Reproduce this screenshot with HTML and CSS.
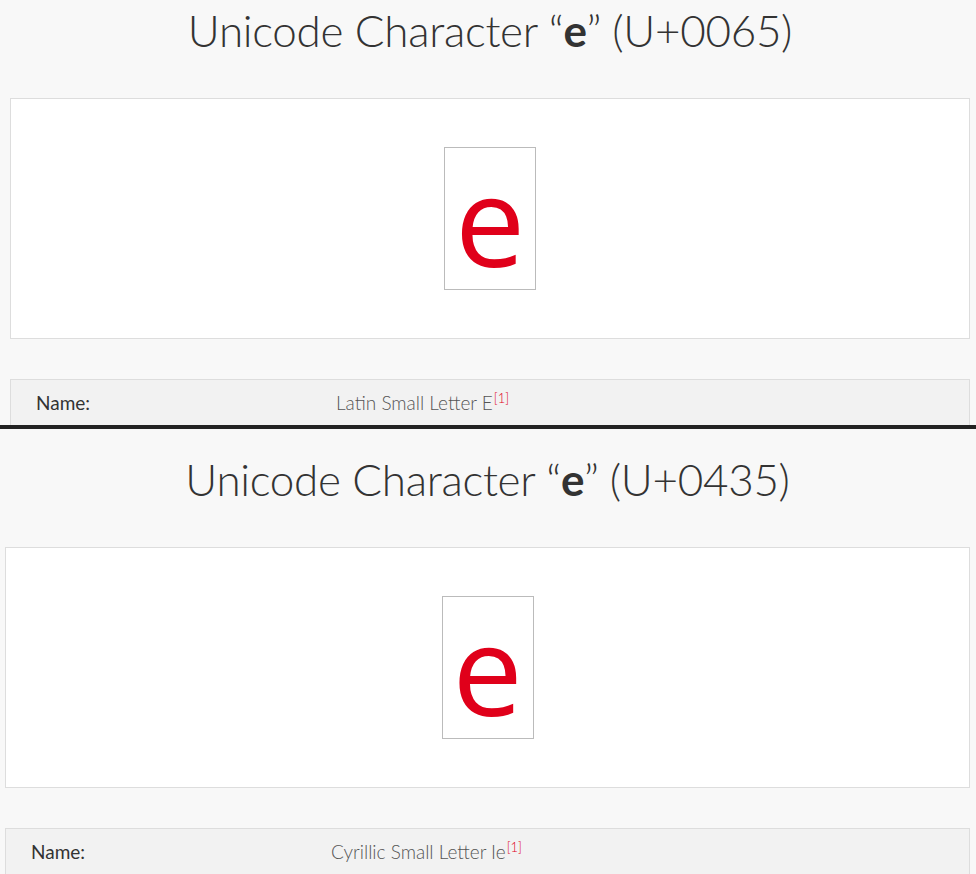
FILE: index.html
```html
<!DOCTYPE html>
<html>
<head>
<meta charset="utf-8">
<link rel="stylesheet" href="styles.css">
</head>
<body>
<section class="page page-a">
  <h1 class="title">Unicode Character “<strong>e</strong>” (U+0065)</h1>
  <div class="preview">
    <div class="glyph-box"><span class="glyph">e</span></div>
  </div>
  <div class="info">
    <div class="info-row">
      <span class="label">Name:</span>
      <span class="value">Latin Small Letter E<sup class="ref">[1]</sup></span>
    </div>
  </div>
</section>
<div class="divider"></div>
<section class="page page-b">
  <h1 class="title">Unicode Character “<strong>е</strong>” (U+0435)</h1>
  <div class="preview">
    <div class="glyph-box"><span class="glyph">е</span></div>
  </div>
  <div class="info">
    <div class="info-row">
      <span class="label">Name:</span>
      <span class="value">Cyrillic Small Letter Ie<sup class="ref">[1]</sup></span>
    </div>
  </div>
</section>
</body>
</html>
```
FILE: styles.css
```css
html, body {
  margin: 0;
  padding: 0;
  background: #f8f8f8;
}
body {
  width: 976px;
  height: 874px;
  overflow: hidden;
  font-family: Lato, "Open Sans", sans-serif;
  color: #333;
}
.page {
  display: flex;
  flex-direction: column;
  overflow: hidden;
  box-sizing: border-box;
}
.page > * {
  flex-shrink: 0;
}
.page-a {
  height: 425px;
  padding: 0 6px 0 10px;
}
.page-b {
  height: 445px;
  padding: 20px 6px 0 5px;
}
.title {
  margin: 0;
  height: 98px;
  padding-top: 4px;
  box-sizing: border-box;
  text-align: center;
  font-weight: 300;
  font-size: 44px;
  line-height: 52px;
  color: #333;
  letter-spacing: -0.3px;
}
.title strong {
  font-weight: 700;
}
.preview {
  height: 241px;
  background: #fff;
  border: 1px solid #ddd;
  box-sizing: border-box;
  display: flex;
  align-items: center;
  justify-content: center;
}
.glyph-box {
  width: 92px;
  height: 143px;
  border: 1px solid #bbb;
  box-sizing: border-box;
  display: flex;
  justify-content: center;
}
.glyph {
  font-family: "Open Sans", "Noto Sans", sans-serif;
  font-size: 125px;
  line-height: 141px;
  color: #e0001a;
}
.info {
  margin-top: 40px;
  background: #f2f2f2;
  border: 1px solid #ddd;
  height: 60px;
}
.info-row {
  display: flex;
  align-items: baseline;
  padding: 12px 0 0 25px;
  font-size: 19px;
  line-height: 22px;
}
.label {
  width: 300px;
  color: #333;
  font-weight: 400;
}
.value {
  color: #555;
  font-weight: 300;
}
.ref {
  color: #e0001a;
  font-size: 13px;
  line-height: 0;
  margin-left: 1px;
}
.divider {
  height: 4px;
  background: #222;
}
```
